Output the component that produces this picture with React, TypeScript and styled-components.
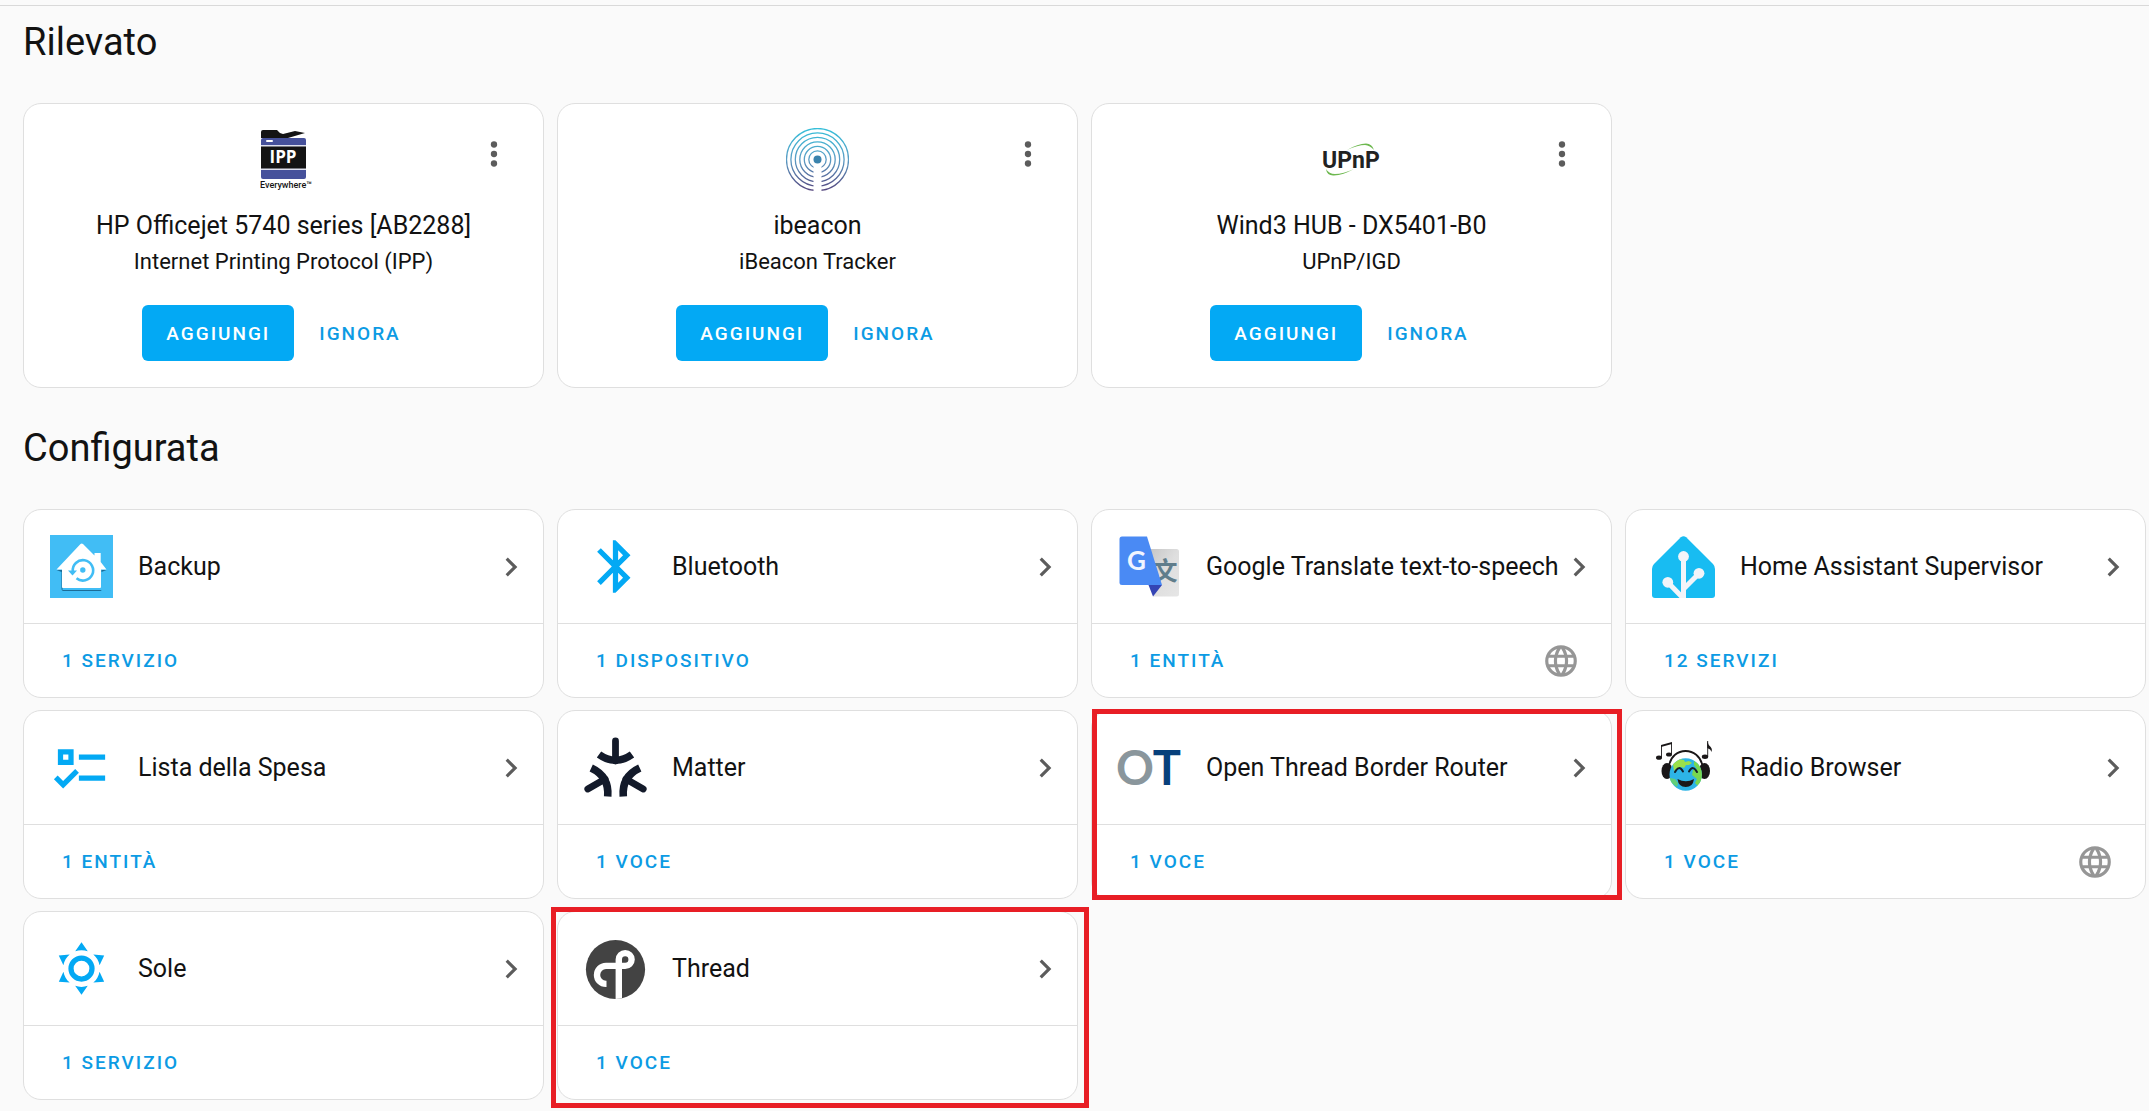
import React from "react";
import styled, { createGlobalStyle } from "styled-components";

const color = {
  page: "#fafafa",
  card: "#ffffff",
  line: "#dfdfdf",
  text: "#121212",
  icon: "#5c5c5c",
  muted: "#969696",
  primary: "#03a9f4",
  link: "#0c9be4",
  mark: "#e81e25",
};

const GlobalStyle = createGlobalStyle`
  *, *::before, *::after { box-sizing: border-box; }
  body {
    margin: 0;
    background: ${color.page};
    color: ${color.text};
    font-family: Roboto, "Liberation Sans", sans-serif;
  }
`;

const Page = styled.main`
  margin-top: 5px;
  padding: 12px 3px 8px 23px;
  border-top: 1px solid #d9d9d9;
`;

const Section = styled.section`
  & + & {
    margin-top: 36px;
  }
`;

const Title = styled.h1`
  margin: 0 0 37px;
  font-size: 38px;
  line-height: 48px;
  font-weight: 400;
`;

const Grid = styled.div`
  display: grid;
  grid-template-columns: repeat(4, minmax(0, 1fr));
  gap: 12px 13px;
`;

const Card = styled.article`
  position: relative;
  display: flex;
  flex-direction: column;
  background: ${color.card};
  border: 1px solid ${color.line};
  border-radius: 18px;
`;

const DiscoveredCard = styled(Card)`
  align-items: center;
  padding: 24px 25px 26px;
  text-align: center;
`;

const Logo = styled.svg`
  flex: none;
  display: block;
  width: 63px;
  height: 63px;
`;

const MenuButton = styled.button`
  position: absolute;
  top: 12px;
  right: 12px;
  display: grid;
  place-items: center;
  width: 75px;
  height: 75px;
  padding: 0;
  border: 0;
  background: none;
  color: ${color.icon};
`;

const DeviceName = styled.h2`
  margin: 17px 0 0;
  font-size: 25px;
  line-height: 36px;
  font-weight: 400;
`;

const IntegrationName = styled.p`
  margin: 0;
  font-size: 22px;
  line-height: 36px;
`;

const Actions = styled.div`
  display: flex;
  gap: 13px;
  margin-top: 25px;
  padding-right: 12px;
`;

const ActionButton = styled.button<{ $raised?: boolean }>`
  height: 56px;
  padding: 0 ${(p) => (p.$raised ? 24 : 12)}px;
  border: 0;
  border-radius: 6px;
  background: ${(p) => (p.$raised ? color.primary : "none")};
  color: ${(p) => (p.$raised ? "#fff" : color.link)};
  font-family: inherit;
  font-size: 19px;
  font-weight: 500;
  letter-spacing: 2px;
  text-transform: uppercase;
`;

const CardHeader = styled.a`
  display: flex;
  align-items: center;
  padding: 25px 13px 25px 26px;
  color: inherit;
  text-decoration: none;
`;

const CardName = styled.span`
  flex: 1;
  min-width: 0;
  padding-left: 25px;
  font-size: 25px;
  line-height: 36px;
  white-space: nowrap;
`;

const Glyph = styled.svg<{ $tone?: string }>`
  flex: none;
  display: block;
  width: 38px;
  height: 38px;
  fill: ${(p) => p.$tone ?? color.icon};
`;

const CardFooter = styled.div`
  display: flex;
  align-items: center;
  justify-content: space-between;
  height: 74px;
  padding: 0 31px 0 38px;
  border-top: 1px solid ${color.line};
`;

const EntryLink = styled.a`
  color: ${color.link};
  font-size: 19px;
  line-height: 36px;
  font-weight: 500;
  letter-spacing: 2px;
  text-decoration: none;
  text-transform: uppercase;
`;

const Highlight = styled.span<{ $inset: string }>`
  position: absolute;
  inset: ${(p) => p.$inset};
  z-index: 1;
  border: 5px solid ${color.mark};
  pointer-events: none;
`;

const IppLogo = () => (
  <Logo viewBox="0 0 63 63" aria-hidden="true">
    <path d="M9 10V4q0-2 2-2h14l3 3 3 1 12-3 10 2-17 5z" fill="#141414" />
    <rect x="9" y="10" width="45" height="41" rx="2" fill="#46519b" />
    <rect x="14" y="12" width="7" height="2" rx="1" fill="#fff" />
    <rect x="9" y="17" width="45" height="25" fill="#dfe1ef" />
    <rect x="9" y="18.500" width="45" height="22" fill="#141414" />
    <text x="31" y="35" textAnchor="middle" fontFamily="Open Sans, sans-serif" fontWeight="700" fontSize="17" fill="#fff">IPP</text>
    <text x="8" y="60" fontFamily="Roboto, sans-serif" fontWeight="500" fontSize="9" fill="#141414">Everywhere™</text>
  </Logo>
);

const BeaconLogo = () => (
  <Logo viewBox="0 0 63 63" aria-hidden="true">
    <defs>
      <linearGradient id="beacon" gradientUnits="userSpaceOnUse" x1="0" y1="0" x2="0" y2="63">
        <stop offset="0" stopColor="#35bfd9" />
        <stop offset="0.5" stopColor="#5a9cc4" />
        <stop offset="1" stopColor="#55457d" />
      </linearGradient>
    </defs>
    <g fill="none" stroke="url(#beacon)" strokeWidth="1.3">
      {[31, 26.6, 22.2, 17.7, 13.2, 8.7].map((r) => (
        <circle key={r} cx="31.5" cy="31.5" r={r} />
      ))}
    </g>
    <path d="M27.500 37h8v26h-8z" fill="#fff" />
    <circle cx="31.500" cy="31.500" r="4" fill="#3a83ad" />
  </Logo>
);

const UpnpLogo = () => (
  <Logo viewBox="0 0 63 63" aria-hidden="true">
    <path d="M27 22Q38 15.500 46 15.500 52 15.500 54 22 50 17.500 45 17 38 17 27 22z" fill="#6db84f" />
    <path d="M6 41Q7 48 14 47.500 23 47 34 41 23 46 15 46 9 46 6 41z" fill="#6db84f" />
    <text x="2" y="40" fontFamily="Roboto, sans-serif" fontWeight="700" fontSize="23" fill="#222">UPnP</text>
  </Logo>
);

const BackupLogo = () => (
  <Logo viewBox="0 0 63 63" aria-hidden="true">
    <path d="M0 0h63v63H0z" fill="#41bdf5" />
    <path d="M6.500 35h6v20h39v-20h5l-5 2v18q0 1-1 1h-37q-2 0-2-2V37z" fill="#1b6d98" />
    <path d="M30.500 9q1.200-1 2.500 0L44.500 20.500V18h6.200v9l5.800 7.500H51V52q0 1-1 1H13q-1 0-1-1V34.500H6.500z" fill="#fff" />
    <path d="M22.800 36.500A10.200 10.200 0 1 1 26.500 43.300" fill="none" stroke="#41bdf5" strokeWidth="2.600" />
    <path d="M18 35.500h9l-4.500 5z" fill="#41bdf5" />
    <circle cx="32.800" cy="35" r="2.700" fill="#41bdf5" />
  </Logo>
);

const BluetoothLogo = () => (
  <Logo viewBox="0 0 24 24" fill={color.primary} aria-hidden="true">
    <path d="M14.88,16.29L13,18.17V14.41M13,5.83L14.88,7.71L13,9.58M17.71,7.71L12,2H11V9.58L6.41,5L5,6.41L10.59,12L5,17.58L6.41,19L11,14.41V22H12L17.71,16.29L13.41,12L17.71,7.71Z" />
  </Logo>
);

const TranslateLogo = () => (
  <Logo viewBox="0 0 63 63" aria-hidden="true">
    <defs>
      <linearGradient id="sheet" x1="0" y1="0" x2="1" y2="1">
        <stop offset="0" stopColor="#c4c4c4" />
        <stop offset="0.5" stopColor="#dedede" />
        <stop offset="1" stopColor="#e6e6e6" />
      </linearGradient>
    </defs>
    <path d="M30 14h28.500q2.500 0 2.500 2.500V59q0 2.500-2.500 2.500H35z" fill="url(#sheet)" />
    <text x="47" y="45" textAnchor="middle" fontFamily="Noto Sans CJK SC, sans-serif" fontWeight="700" fontSize="25" fill="#607d8b">文</text>
    <path d="M30.500 50H44L35 61.500z" fill="#3444b4" />
    <path d="M4 1.500h25L44 50H4Q1.500 50 1.500 47.500V4Q1.500 1.500 4 1.500z" fill="#4a8af4" />
    <text x="18.500" y="35" textAnchor="middle" fontFamily="Lato, sans-serif" fontWeight="700" fontSize="26" fill="#f1f5ff">G</text>
  </Logo>
);

const SupervisorLogo = () => (
  <Logo viewBox="0 0 63 63" aria-hidden="true">
    <path d="M28.800 2.300q2.700-2 5.400 0L61 29q2 2 2 5v26q0 3-3 3H3q-3 0-3-3V34q0-3 2-5z" fill="#18bcf2" />
    <g stroke="#f2f4f9" strokeWidth="5" fill="none">
      <path d="M31.500 22v41M16 47.500L31 63M47 38.500L31.500 54" />
    </g>
    <g fill="#f2f4f9">
      <circle cx="31.500" cy="21.500" r="5.400" />
      <circle cx="47" cy="38.300" r="5.400" />
      <circle cx="15.800" cy="47.300" r="5.400" />
    </g>
  </Logo>
);

const ListLogo = () => (
  <Logo viewBox="0 0 24 24" fill={color.primary} aria-hidden="true">
    <path d="M3,5H9V11H3V5M5,7V9H7V7H5M11,7H21V9H11V7M11,15H21V17H11V15M5,20L1.5,16.5L2.91,15.09L5,17.17L9.59,12.59L11,14L5,20Z" />
  </Logo>
);

const MatterLogo = () => (
  <Logo viewBox="0 0 63 63" aria-hidden="true">
    <g fill="none" stroke="#131a2a">
      {[0, 120, 240].map((angle) => (
        <g key={angle} transform={`rotate(${angle} 31.5 37)`}>
          <path d="M31.500 5V25" strokeLinecap="round" strokeWidth="6.800" />
          <path d="M15 18.500Q31.500 30 48 18.500" strokeWidth="7.600" />
        </g>
      ))}
    </g>
  </Logo>
);

const OpenThreadLogo = () => (
  <Logo viewBox="0 0 63 63" overflow="visible" aria-hidden="true">
    <text x="-2" y="49" fontFamily="Lato, sans-serif" fontWeight="700" fontSize="47">
      <tspan fill="#8a969c">O</tspan>
      <tspan fill="#07407b">T</tspan>
    </text>
  </Logo>
);

const RadioLogo = () => (
  <Logo viewBox="0 0 63 63" aria-hidden="true">
    <defs>
      <clipPath id="globe">
        <circle cx="33.700" cy="38.500" r="16.200" />
      </clipPath>
    </defs>
    <path d="M17 30C20 10 47 10 50.500 30" fill="none" stroke="#1a1718" strokeWidth="1.800" />
    <ellipse cx="15" cy="35" rx="5.500" ry="8" fill="#1a1718" />
    <ellipse cx="52.500" cy="35" rx="5.500" ry="8" fill="#1a1718" />
    <g clipPath="url(#globe)">
      <path d="M17 22h34v34H17z" fill="#2db4e6" />
      <path d="M21 28l6-5 5 1 1 2 4-1 3 2-3 2-3 0-2 3-3-1-2 2-3 0-2 2z" fill="#9be04a" />
      <path d="M42 25l8 5 1 15-5 5-3-3 2-4-5-4 1-5 4-1-3-4z" fill="#78d850" />
      <path d="M18 42l5 1 3 4-1 4-7-5z" fill="#62cf78" />
    </g>
    <g fill="none" stroke="#15202a" strokeWidth="2" strokeLinecap="round">
      <path d="M23 36Q27 28.500 31 35.500M37 35.500Q41 28.500 45 36" />
    </g>
    <path d="M25.500 43Q34 47.500 42 43 41 51 33.700 51 26.500 51 25.500 43z" fill="#1a1718" />
    <g fill="#1a1718">
      <ellipse cx="7" cy="21.700" rx="3" ry="2.100" />
      <ellipse cx="17" cy="18.500" rx="3" ry="2.100" />
      <ellipse cx="53" cy="20.700" rx="3.200" ry="2.200" />
      <path d="M9 9l11-3v2L9 11z" />
      <path d="M55.200 5q1 4 3.500 6 2 2 1 5-1-3-4.500-4z" />
    </g>
    <path d="M9.500 9v12.500M19.500 7v11.500M55.700 5v15.500" stroke="#1a1718" strokeWidth="0.900" />
  </Logo>
);

const SunLogo = () => (
  <Logo viewBox="0 0 24 24" fill={color.primary} aria-hidden="true">
    <path d="M12,7A5,5 0 0,1 17,12A5,5 0 0,1 12,17A5,5 0 0,1 7,12A5,5 0 0,1 12,7M12,9A3,3 0 0,0 9,12A3,3 0 0,0 12,15A3,3 0 0,0 15,12A3,3 0 0,0 12,9M12,2L14.39,5.42C13.65,5.15 12.84,5 12,5C11.16,5 10.35,5.15 9.61,5.42L12,2M3.34,7L7.5,6.65C6.9,7.16 6.36,7.78 5.94,8.5C5.5,9.24 5.25,10 5.11,10.79L3.34,7M3.36,17L5.12,13.23C5.26,14 5.53,14.78 5.95,15.5C6.37,16.24 6.91,16.86 7.5,17.37L3.36,17M20.65,7L18.88,10.79C18.74,10 18.47,9.23 18.05,8.5C17.63,7.78 17.1,7.15 16.5,6.64L20.65,7M20.64,17L16.5,17.36C17.09,16.85 17.62,16.22 18.04,15.5C18.46,14.77 18.73,14 18.87,13.21L20.64,17M12,22L9.59,18.56C10.33,18.83 11.14,19 12,19C12.82,19 13.63,18.83 14.37,18.56L12,22Z" />
  </Logo>
);

const ThreadLogo = () => (
  <Logo viewBox="0 0 63 63" aria-hidden="true">
    <defs>
      <clipPath id="disc">
        <circle cx="31.500" cy="32.500" r="29.600" />
      </clipPath>
    </defs>
    <g clipPath="url(#disc)">
      <path d="M0 0h63v63H0z" fill="#434343" />
      <path d="M34.800 63V22.500a6.400 6.400 0 1 1 6.400 6.400H22a9 9 0 0 0 0 18h.500" fill="none" stroke="#fff" strokeWidth="6.400" />
    </g>
  </Logo>
);

const DotsGlyph = () => (
  <Glyph viewBox="0 0 24 24" aria-hidden="true">
    <circle cx="12" cy="6" r="2" />
    <circle cx="12" cy="12" r="2" />
    <circle cx="12" cy="18" r="2" />
  </Glyph>
);

const ChevronGlyph = () => (
  <Glyph viewBox="0 0 24 24" aria-hidden="true">
    <path d="M8.59,16.58L13.17,12L8.59,7.41L10,6L16,12L10,18L8.59,16.58Z" />
  </Glyph>
);

const WebGlyph = () => (
  <Glyph viewBox="0 0 24 24" $tone={color.muted} role="img" aria-label="Cloud">
    <path d="M16.36,14C16.44,13.34 16.5,12.68 16.5,12C16.5,11.32 16.44,10.66 16.36,10H19.74C19.9,10.64 20,11.31 20,12C20,12.69 19.9,13.36 19.74,14M14.59,19.56C15.19,18.45 15.65,17.25 15.97,16H18.92C17.96,17.65 16.43,18.93 14.59,19.56M14.34,14H9.66C9.56,13.34 9.5,12.68 9.5,12C9.5,11.32 9.56,10.65 9.66,10H14.34C14.43,10.65 14.5,11.32 14.5,12C14.5,12.68 14.43,13.34 14.34,14M12,19.96C11.17,18.76 10.5,17.43 10.09,16H13.91C13.5,17.43 12.83,18.76 12,19.96M8,8H5.08C6.03,6.34 7.57,5.06 9.4,4.44C8.8,5.55 8.35,6.75 8,8M5.08,16H8C8.35,17.25 8.8,18.45 9.4,19.56C7.57,18.93 6.03,17.65 5.08,16M4.26,14C4.1,13.36 4,12.69 4,12C4,11.31 4.1,10.64 4.26,10H7.64C7.56,10.66 7.5,11.32 7.5,12C7.5,12.68 7.56,13.34 7.64,14M12,4.03C12.83,5.23 13.5,6.57 13.91,8H10.09C10.5,6.57 11.17,5.23 12,4.03M18.92,8H15.97C15.65,6.75 15.19,5.55 14.59,4.44C16.43,5.07 17.96,6.34 18.92,8M12,2C6.47,2 2,6.5 2,12A10,10 0 0,0 12,22A10,10 0 0,0 22,12A10,10 0 0,0 12,2Z" />
  </Glyph>
);

type Discovered = { logo: React.FC; name: string; integration: string };

const discovered: Discovered[] = [
  { logo: IppLogo, name: "HP Officejet 5740 series [AB2288]", integration: "Internet Printing Protocol (IPP)" },
  { logo: BeaconLogo, name: "ibeacon", integration: "iBeacon Tracker" },
  { logo: UpnpLogo, name: "Wind3 HUB - DX5401-B0", integration: "UPnP/IGD" },
];

type Configured = {
  logo: React.FC;
  name: string;
  entries: string;
  cloud?: boolean;
  highlight?: string;
};

const configured: Configured[] = [
  { logo: BackupLogo, name: "Backup", entries: "1 servizio" },
  { logo: BluetoothLogo, name: "Bluetooth", entries: "1 dispositivo" },
  { logo: TranslateLogo, name: "Google Translate text-to-speech", entries: "1 entità", cloud: true },
  { logo: SupervisorLogo, name: "Home Assistant Supervisor", entries: "12 servizi" },
  { logo: ListLogo, name: "Lista della Spesa", entries: "1 entità" },
  { logo: MatterLogo, name: "Matter", entries: "1 voce" },
  { logo: OpenThreadLogo, name: "Open Thread Border Router", entries: "1 voce", highlight: "-2px -11px -2px 0" },
  { logo: RadioLogo, name: "Radio Browser", entries: "1 voce", cloud: true },
  { logo: SunLogo, name: "Sole", entries: "1 servizio" },
  { logo: ThreadLogo, name: "Thread", entries: "1 voce", highlight: "-5px -12px -9px -7px" },
];

export default function App() {
  return (
    <>
      <GlobalStyle />
      <Page>
        <Section>
          <Title>Rilevato</Title>
          <Grid>
            {discovered.map(({ logo: Icon, name, integration }) => (
              <DiscoveredCard key={name}>
                <Icon />
                <MenuButton type="button" aria-label={`Menu ${name}`}>
                  <DotsGlyph />
                </MenuButton>
                <DeviceName>{name}</DeviceName>
                <IntegrationName>{integration}</IntegrationName>
                <Actions>
                  <ActionButton type="button" $raised>Aggiungi</ActionButton>
                  <ActionButton type="button">Ignora</ActionButton>
                </Actions>
              </DiscoveredCard>
            ))}
          </Grid>
        </Section>
        <Section>
          <Title>Configurata</Title>
          <Grid>
            {configured.map(({ logo: Icon, name, entries, cloud, highlight }) => (
              <Card key={name}>
                <CardHeader href="#">
                  <Icon />
                  <CardName>{name}</CardName>
                  <ChevronGlyph />
                </CardHeader>
                <CardFooter>
                  <EntryLink href="#">{entries}</EntryLink>
                  {cloud && <WebGlyph />}
                </CardFooter>
                {highlight && <Highlight $inset={highlight} />}
              </Card>
            ))}
          </Grid>
        </Section>
      </Page>
    </>
  );
}
